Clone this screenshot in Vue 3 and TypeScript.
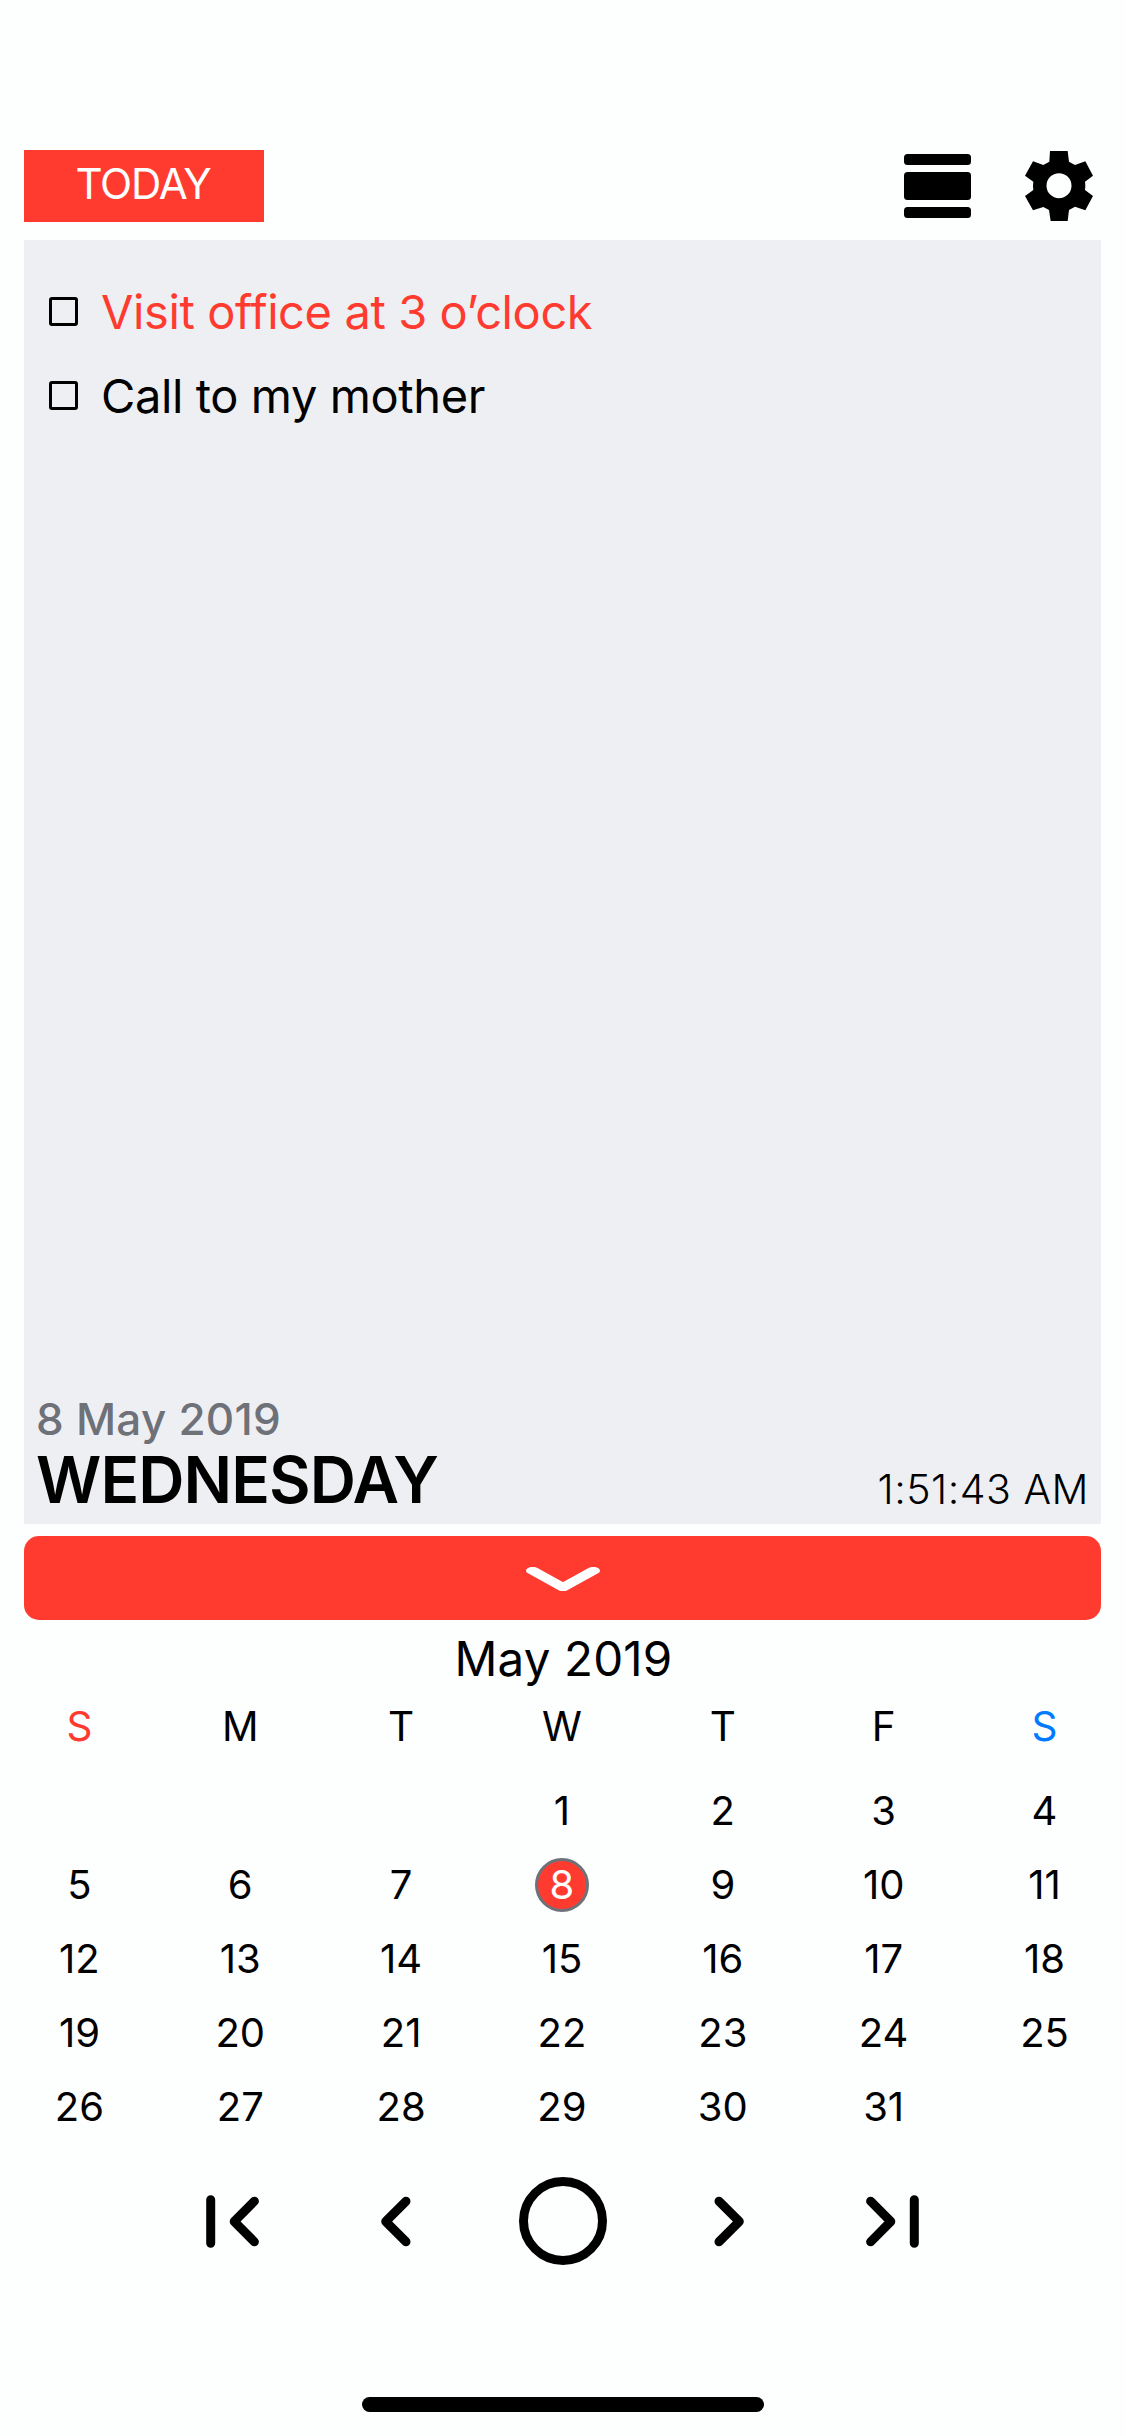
<script setup lang="ts">
interface Task {
  title: string
  urgent: boolean
}

const tasks: Task[] = [
  { title: 'Visit office at 3 o’clock', urgent: true },
  { title: 'Call to my mother', urgent: false },
]

const weekdays: string[] = ['S', 'M', 'T', 'W', 'T', 'F', 'S']
const firstWeekday = 3
const selectedDay = 8

const cells: (number | null)[] = Array.from({ length: 35 }, (_, i) => {
  const day = i - firstWeekday + 1
  return day >= 1 && day <= 31 ? day : null
})
</script>

<template>
  <main class="screen">
    <header class="toolbar">
      <button class="today">TODAY</button>
      <svg class="layout-icon" width="67" height="64" viewBox="0 0 67 64">
        <rect x="0" y="0" width="67" height="11" rx="3.5" />
        <rect x="0" y="18" width="67" height="28" rx="3.5" />
        <rect x="0" y="53" width="67" height="11" rx="3.5" />
      </svg>
      <svg class="gear-icon" width="68" height="70" viewBox="525 63 204 210">
        <path
          fill-rule="evenodd"
          d="M600 63H653L657 95L675 105L706 94L729 137L705 155Q707 167 705 180L729 198L706 241L675 230L657 240L653 273H602L597 240L580 231L549 241L525 198L550 180Q548 167 550 155L525 137L549 94L580 105L598 95ZM627 129.500a37.500 37.500 0 1 0 0 75a37.500 37.500 0 1 0 0-75Z"
        />
      </svg>
    </header>

    <section class="panel">
      <ul class="tasks">
        <li v-for="task in tasks" :key="task.title" class="task" :class="{ urgent: task.urgent }">
          <span class="checkbox"></span>
          <span class="task-title">{{ task.title }}</span>
        </li>
      </ul>
      <footer class="summary">
        <div>
          <div class="date">8 May 2019</div>
          <div class="weekday-name">WEDNESDAY</div>
        </div>
        <div class="clock">1:51:43 AM</div>
      </footer>
    </section>

    <button class="collapse">
      <svg width="74" height="24" viewBox="-24.800 -4.500 49.600 29.300" preserveAspectRatio="none">
        <path class="stroke" d="M-20.300 0L0 20.300L20.300 0" />
      </svg>
    </button>

    <h1 class="month">May 2019</h1>
    <div class="weekdays">
      <span
        v-for="(name, i) in weekdays"
        :key="i"
        :class="{ sunday: i === 0, saturday: i === 6 }"
      >{{ name }}</span>
    </div>
    <div class="days">
      <span v-for="(day, i) in cells" :key="i" class="day">
        <span v-if="day" :class="{ selected: day === selectedDay }">{{ day }}</span>
      </span>
    </div>

    <nav class="pager">
      <svg width="53" height="53" viewBox="0 0 53 53">
        <path class="stroke" d="M4.700 4.800V48.200M48.400 6.200L28.200 26.500L48.400 46.800" />
      </svg>
      <svg class="prev" width="30" height="53" viewBox="0 0 30 53">
        <path class="stroke" d="M25 6.200L4.700 26.500L25 46.800" />
      </svg>
      <svg class="now" width="88" height="88" viewBox="0 0 88 88">
        <circle class="stroke" cx="44" cy="44" r="39.500" />
      </svg>
      <svg class="next" width="30" height="53" viewBox="0 0 30 53">
        <path class="stroke" d="M5 6.200L25.300 26.500L5 46.800" />
      </svg>
      <svg width="53" height="53" viewBox="0 0 53 53">
        <path class="stroke" d="M48.300 4.800V48.200M4.600 6.200L24.800 26.500L4.600 46.800" />
      </svg>
    </nav>

    <div class="home-indicator"></div>
  </main>
</template>

<style>
body {
  background: #fdfefe;
}
</style>

<style scoped>
.screen {
  box-sizing: border-box;
  width: 1125px;
  height: 2436px;
  padding: 150px 24px 24px;
  display: flex;
  flex-direction: column;
  background: #fdfefe;
  color: #000;
  font-family: Inter, 'Liberation Sans', sans-serif;
  overflow: hidden;
}
button {
  border: 0;
  margin: 0;
  font-family: inherit;
  color: #fff;
  background: #ff3b30;
}
.toolbar {
  flex: none;
  display: flex;
  align-items: center;
  height: 72px;
  margin-bottom: 18px;
}
.today {
  width: 240px;
  height: 72px;
  padding: 0 2px 6px 0;
  font-size: 42px;
  font-weight: 400;
  letter-spacing: -1.2px;
}
.layout-icon {
  margin-left: auto;
}
.gear-icon {
  margin: 0 8px 0 54px;
}
.panel {
  flex: none;
  box-sizing: border-box;
  height: 1284px;
  padding: 29.5px 12px 10.5px;
  display: flex;
  flex-direction: column;
  justify-content: space-between;
  background: #eeeff3;
}
.tasks {
  margin: 0;
  padding: 0 0 0 13px;
  list-style: none;
}
.task {
  height: 84px;
  display: flex;
  align-items: center;
  gap: 23px;
}
.checkbox {
  box-sizing: border-box;
  width: 29px;
  height: 29px;
  border: 3px solid #000;
  border-radius: 3px;
}
.task-title {
  font-size: 47px;
  letter-spacing: -0.4px;
  white-space: nowrap;
}
.urgent .task-title {
  color: #ff3b30;
}
.summary {
  display: flex;
  justify-content: space-between;
  align-items: flex-end;
  white-space: nowrap;
}
.date {
  font-size: 44px;
  line-height: 54px;
  font-weight: 500;
  letter-spacing: 0.25px;
  color: #6f7179;
}
.weekday-name {
  font-size: 64px;
  line-height: 67.5px;
  font-weight: 600;
  letter-spacing: -0.9px;
}
.clock {
  font-size: 41px;
  line-height: 49px;
  font-weight: 300;
  letter-spacing: 0.5px;
}
.collapse {
  flex: none;
  height: 84px;
  margin-top: 12px;
  padding: 2px 0 0;
  border-radius: 15px;
  display: flex;
  align-items: center;
  justify-content: center;
}
.collapse .stroke {
  stroke: #fff;
}
.month {
  flex: none;
  margin: 0;
  padding-left: 2px;
  font-size: 47.5px;
  line-height: 77px;
  font-weight: 400;
  letter-spacing: 0.15px;
  text-align: center;
}
.weekdays,
.days {
  flex: none;
  display: grid;
  grid-template-columns: repeat(7, 160.85px);
  margin: 0 -24px 0 -25px;
  text-align: center;
}
.weekdays {
  font-size: 40.5px;
  line-height: 60.6px;
}
.sunday {
  color: #ff3b30;
}
.saturday {
  color: #007aff;
}
.days {
  margin-top: 17px;
  grid-auto-rows: 73.8px;
  font-size: 40px;
  line-height: 48px;
}
.day {
  display: flex;
  align-items: center;
  justify-content: center;
}
.selected {
  box-sizing: border-box;
  width: 54px;
  height: 54px;
  border: 3px solid #6f7179;
  border-radius: 50%;
  background: #ff3b30;
  color: #fff;
}
.pager {
  flex: none;
  display: flex;
  align-items: center;
  justify-content: center;
  height: 88px;
  margin-top: 33.5px;
}
.prev {
  margin: 0 107.5px 0 122px;
}
.next {
  margin: 0 122.5px 0 107px;
}
.stroke {
  fill: none;
  stroke: #000;
  stroke-width: 9px;
  stroke-linecap: round;
  stroke-linejoin: round;
}
.home-indicator {
  width: 402px;
  height: 15px;
  margin: auto auto 0;
  border-radius: 8px;
  background: #000;
}
</style>
